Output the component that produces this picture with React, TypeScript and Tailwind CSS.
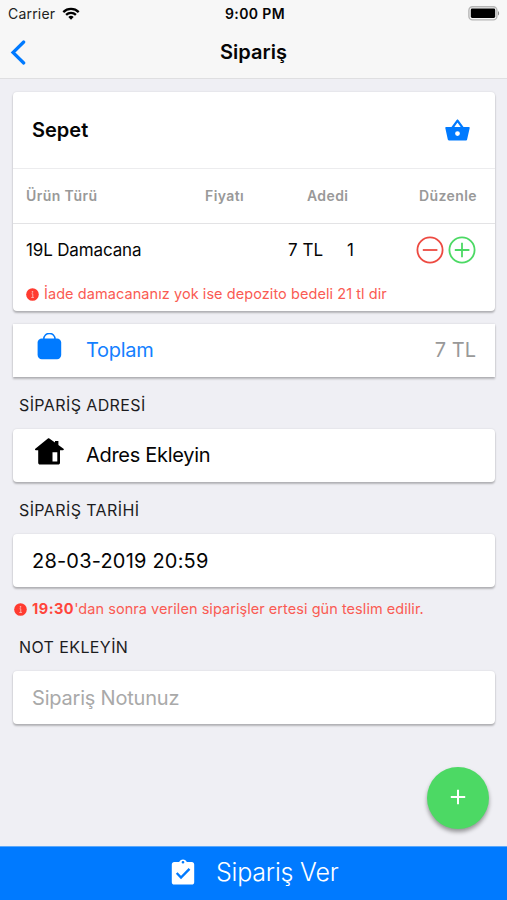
import React, { useState } from 'react';

const cardShadow = 'shadow-[0_2px_2px_rgba(0,0,0,0.24),0_0_2px_rgba(0,0,0,0.12)]';

function InfoIcon() {
  return (
    <svg viewBox="0 0 14 14" className="w-[13px] h-[13px] mt-[2px] shrink-0">
      <circle cx="7" cy="7" r="6.8" fill="#ff3b30" />
      <circle cx="7" cy="4.1" r="0.9" fill="#fbb5b1" />
      <path d="M6 6.2h1.3v3.9M5.7 10.2h2.8" stroke="#fbb5b1" strokeWidth="1" fill="none" />
    </svg>
  );
}

function StatusBar() {
  return (
    <div className="flex items-center justify-between h-[27px] pl-[8px] pr-[7px]">
      <div className="flex items-center gap-[7px] flex-1">
        <span className="text-[14px] tracking-[0.2px] text-[#222]">Carrier</span>
        <svg viewBox="0 0 18 13" className="w-[18px] h-[13px]" fill="none" stroke="#000" strokeWidth="2.3">
          <path d="M1.3 5.1a11 11 0 0 1 15.4 0" />
          <path d="M4.1 7.9a7 7 0 0 1 9.8 0" />
          <path d="M9 12.7 6.3 10a3.9 3.9 0 0 1 5.4 0Z" fill="#000" stroke="none" />
        </svg>
      </div>
      <span className="text-[14px] font-semibold tracking-[0.4px] pl-[2px]">9:00 PM</span>
      <div className="flex flex-1 justify-end">
        <svg viewBox="0 0 33 15" className="w-[33px] h-[15px]">
          <rect x="1.9" y="0.7" width="28" height="13.2" rx="3.6" fill="none" stroke="#b5b5b5" strokeWidth="1.4" />
          <rect x="3.8" y="2.6" width="24.4" height="9.4" rx="1.4" fill="#000" />
          <path d="M31 5c1.5.7 1.5 3.9 0 4.6z" fill="#8a8a8a" />
        </svg>
      </div>
    </div>
  );
}

function Header() {
  return (
    <header className="h-[79px] shrink-0 bg-[#f7f7f7] border-b border-[#dfdfe1]">
      <StatusBar />
      <div className="grid grid-cols-3 items-center h-[50px] px-[10px]">
        <button className="w-[16px]">
          <svg viewBox="0 0 16 25" className="w-[16px] h-[25px]" fill="none" stroke="#007aff" strokeWidth="3.2" strokeLinecap="round">
            <path d="M13.7 2 3 12.5 13.7 23" />
          </svg>
        </button>
        <h1 className="text-[20px] font-semibold text-center">Sipariş</h1>
      </div>
    </header>
  );
}

function Basket({ count, onChange }: { count: number; onChange: (n: number) => void }) {
  return (
    <section className={`h-[219px] rounded-[4px] bg-white ${cardShadow}`}>
      <div className="flex items-center justify-between h-[77px] pl-[19px] pr-[25px] border-b border-[#ececee]">
        <h2 className="text-[20px] font-semibold">Sepet</h2>
        <svg viewBox="0 0 25 22" className="w-[25px] h-[22px]">
          <path d="M12.5 1.6 6.8 9.5M12.5 1.6l5.7 7.9" stroke="#007aff" strokeWidth="2.2" fill="none" strokeLinecap="round" />
          <path
            fillRule="evenodd"
            fill="#007aff"
            d="M1 8h23c.5 0 .8.4.7.9l-2.6 11.5c-.1.7-.7 1.1-1.3 1.1H4.2c-.7 0-1.2-.4-1.4-1.1L.3 8.9C.2 8.4.5 8 1 8Zm11.5 4.2a2.4 2.4 0 1 0 0 4.8 2.4 2.4 0 0 0 0-4.8Z"
          />
        </svg>
      </div>
      <div className="flex items-center h-[55px] pb-px pl-[13px] pr-[18px] border-b border-[#e3e3e5] text-[14px] font-semibold tracking-[0.4px] text-[#999]">
        <span className="w-[179px]">Ürün Türü</span>
        <span className="w-[102px]">Fiyatı</span>
        <span className="flex-1">Adedi</span>
        <span>Düzenle</span>
      </div>
      <div className="flex items-center h-[53px] pl-[13px] pr-[19px] text-[17px]">
        <span className="w-[262px] tracking-[-0.15px]">19L Damacana</span>
        <span className="w-[59px]">7 TL</span>
        <span className="flex-1">{count}</span>
        <div className="flex items-center gap-[4px] mb-[2px]">
          <button onClick={() => onChange(Math.max(0, count - 1))}>
            <svg viewBox="0 0 28 28" className="block w-[28px] h-[28px]" fill="none" stroke="#ed4a41" strokeWidth="1.8">
              <circle cx="14" cy="14" r="12.6" />
              <path d="M6.8 14h14.6" />
            </svg>
          </button>
          <button onClick={() => onChange(count + 1)}>
            <svg viewBox="0 0 28 28" className="block w-[28px] h-[28px]" fill="none" stroke="#4cd964" strokeWidth="1.8">
              <circle cx="14" cy="14" r="12.6" />
              <path d="M6.8 14h14.6M14 6.7v14.6" />
            </svg>
          </button>
        </div>
      </div>
      <div className="flex items-center gap-[5px] h-[33px] pl-[13px] text-[14.5px] tracking-[0.07px] text-[#fa5b53]">
        <InfoIcon />
        <span>İade damacananız yok ise depozito bedeli 21 tl dir</span>
      </div>
    </section>
  );
}

export default function App() {
  const [count, setCount] = useState(1);

  return (
    <div className="relative flex flex-col w-[507px] h-[900px] overflow-hidden bg-[#efeff4] text-[#050505] font-['Inter',sans-serif]">
      <Header />

      <main className="flex-1 pl-[13px] pr-[12px] pt-[13px]">
        <Basket count={count} onChange={setCount} />

        {/* Toplam */}
        <div className={`flex items-center h-[53px] mt-[13px] pb-px pl-[24px] pr-[19px] bg-white text-[20px] ${cardShadow}`}>
          <svg viewBox="0 0 25 28" className="w-[25px] h-[28px] mr-[24px] mb-[7px]">
            <path d="M6.8 7.2V6a5.600 5.600 0 0 1 11.200 0v1.200" fill="none" stroke="#007aff" strokeWidth="1.5" />
            <rect x="0.6" y="5.4" width="23.6" height="20.800" rx="4.200" fill="#007aff" />
          </svg>
          <span className="flex-1 tracking-[-0.3px] text-[#147fff]">Toplam</span>
          <span className="text-[#999]">{7 * count} TL</span>
        </div>

        <h3 className="flex items-center h-[52px] pt-[4px] pl-[6px] text-[16px] tracking-[0.4px] text-[#1c1c1e]">SİPARİŞ ADRESİ</h3>
        <div className={`flex items-center h-[53px] pb-px pl-[22px] rounded-[4px] bg-white text-[20px] ${cardShadow}`}>
          <svg viewBox="0 0 29 27" className="w-[29px] h-[27px] mr-[22px] mb-[7px]">
            <path
              fillRule="evenodd"
              d="M14.3.4 20 4.500V3h3.400v4l5.100 3.800c.7.6.2 1.400-.6 1.400H25v12.600c0 1.100-.7 1.800-1.800 1.800H5c-1.100 0-1.800-.7-1.800-1.800V12.200H.8c-.9 0-1.200-.9-.5-1.400L12.900.6c.5-.4.9-.5 1.400-.2ZM17.500 14.300v9.200h4.800v-9.200Z"
            />
          </svg>
          <span className="tracking-[-0.3px]">Adres Ekleyin</span>
        </div>

        <h3 className="flex items-center h-[52px] pt-[4px] pl-[6px] text-[16px] tracking-[0.4px] text-[#1c1c1e]">SİPARİŞ TARİHİ</h3>
        <div className={`flex items-center h-[53px] pl-[19px] rounded-[4px] bg-white text-[20px] tracking-[0.2px] ${cardShadow}`}>
          28-03-2019 20:59
        </div>

        <p className="flex items-center gap-[5px] h-[43px] pl-px text-[14.5px] tracking-[0.05px] text-[#fa5b53]">
          <InfoIcon />
          <span><b className="font-bold tracking-[0.5px] text-[#ff453b]">19:30</b>'dan sonra verilen siparişler ertesi gün teslim edilir.</span>
        </p>

        <h3 className="flex items-center h-[33px] pt-px pl-[6px] text-[16px] tracking-[0.4px] text-[#1c1c1e]">NOT EKLEYİN</h3>
        <input
          placeholder="Sipariş Notunuz"
          className={`block w-full h-[53px] mt-[8px] pl-[19px] rounded-[4px] bg-white text-[20px] tracking-[-0.2px] outline-none placeholder:text-[#a9a9a9] ${cardShadow}`}
        />
      </main>

      <button className="absolute right-[18px] bottom-[71px] flex items-center justify-center w-[62px] h-[62px] rounded-full bg-[#4cd964] shadow-[0_3px_4px_rgba(0,0,0,0.38)]">
        <svg viewBox="0 0 16 16" className="w-[16px] h-[16px] mb-[2px]" stroke="#fff" strokeWidth="2">
          <path d="M8 .8v14.400M.8 8h14.400" />
        </svg>
      </button>

      <footer className="flex items-center h-[54px] shrink-0 pl-[171px] pb-px border-t border-[#5ba8fa] bg-[#007aff] text-white">
        <svg viewBox="0 0 24 26" className="w-[24px] h-[26px] mr-[21px] mb-[3px]">
          <path
            fill="#fff"
            fillRule="evenodd"
            d="M3.2 3h5C8.800 1.500 10.100.6 12 .6S15.200 1.500 15.800 3h5c1.400 0 2.400 1 2.400 2.400v17.800c0 1.400-1 2.400-2.400 2.400H3.200C1.800 25.600.8 24.600.8 23.200V5.400C.8 4 1.800 3 3.200 3ZM12 1.900a1.300 1.300 0 1 0 0 2.700 1.300 1.300 0 0 0 0-2.700Z"
          />
          <path d="m5.700 14 4.300 4.500 8.500-8.700" fill="none" stroke="#007aff" strokeWidth="2.400" />
        </svg>
        <span className="text-[25px] font-light tracking-[-0.2px]">Sipariş Ver</span>
      </footer>
    </div>
  );
}
